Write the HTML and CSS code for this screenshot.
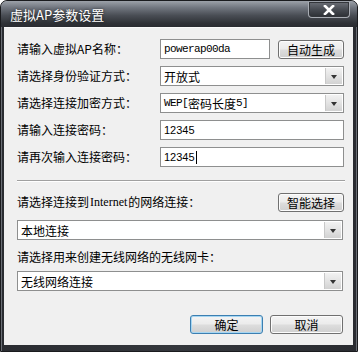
FILE: index.html
```html
<!DOCTYPE html>
<html lang="zh-CN">
<head>
<meta charset="utf-8">
<title>虚拟AP参数设置</title>
<link rel="stylesheet" href="styles.css">
</head>
<body>
<div class="window">
  <div class="titlebar">
    <div class="title">虚拟AP参数设置</div>
    <div class="close">
      <svg width="14" height="10" viewBox="0 0 14 10"><path d="M3 1 L11 9 M11 1 L3 9" stroke="#fff" stroke-width="2.6" stroke-linecap="square"/></svg>
    </div>
  </div>
  <div class="body">
    <div class="form">
      <div class="label">请输入虚拟AP名称：</div>
      <div class="ctrl">
        <div class="input mono short">powerap00da</div>
        <div class="btn small">自动生成</div>
      </div>
      <div class="label">请选择身份验证方式：</div>
      <div class="ctrl">
        <div class="select"><span class="val">开放式</span><span class="arrow"></span></div>
      </div>
      <div class="label">请选择连接加密方式：</div>
      <div class="ctrl">
        <div class="select"><span class="val"><span class="mono">WEP[</span>密码长度<span class="mono">5]</span></span><span class="arrow"></span></div>
      </div>
      <div class="label">请输入连接密码：</div>
      <div class="ctrl">
        <div class="input num">12345</div>
      </div>
      <div class="label">请再次输入连接密码：</div>
      <div class="ctrl">
        <div class="input num">12345<span class="caret"></span></div>
      </div>
    </div>
    <div class="sep"></div>
    <div class="row-head">
      <div class="label">请选择连接到<span class="serif">Internet</span>的网络连接：</div>
      <div class="btn small">智能选择</div>
    </div>
    <div class="select wide"><span class="val">本地连接</span><span class="arrow"></span></div>
    <div class="label lab2">请选择用来创建无线网络的无线网卡：</div>
    <div class="select wide wide2"><span class="val">无线网络连接</span><span class="arrow"></span></div>
    <div class="actions">
      <div class="btn action default">确定</div>
      <div class="btn action">取消</div>
    </div>
  </div>
</div>
</body>
</html>
```

FILE: styles.css
```css
html, body {
  margin: 0;
  padding: 0;
  background: #ffffff;
}
body {
  font-family: "Noto Sans CJK SC", "Noto Sans", sans-serif;
  font-size: 12px;
  color: #000;
}
.window {
  width: 358px;
  height: 352px;
  box-sizing: border-box;
  display: flex;
  flex-direction: column;
  background: linear-gradient(90deg, #2a2c31, #34373c 50%, #2a2c31);
  border-radius: 7px 7px 0 0;
  border: 1px solid #1a1b1e;
  box-shadow: inset 0 1px 0 #a8adb5, inset 1px 0 0 #6a6e75, inset -1px 0 0 #6a6e75;
}
.titlebar {
  height: 26px;
  display: flex;
  justify-content: space-between;
  align-items: flex-start;
  padding: 0 7px 0 9px;
  background: linear-gradient(180deg, #9ca1a9 0%, #727780 25%, #4a4e55 55%, #2f3237 85%, #2a2c31 100%);
  border-radius: 6px 6px 0 0;
}
.title {
  color: #fff;
  font-size: 13px;
  line-height: 16px;
  margin-top: 6px;
  text-shadow: 0 0 3px rgba(0,0,0,0.6);
}
.close {
  width: 42px;
  height: 16px;
  margin-top: 1px;
  box-sizing: border-box;
  border: 1px solid #a9adb4;
  border-top: none;
  border-radius: 0 0 4px 4px;
  background: linear-gradient(180deg, #6c7078 0%, #474b52 50%, #2c2f34 100%);
  display: flex;
  align-items: center;
  justify-content: center;
  box-shadow: inset 0 0 0 1px #33363b;
}
.body {
  flex: 1;
  margin: 0 4px 6px 3px;
  background: #f0f0f0;
  border-top: 1px solid #fafafa;
  padding: 11px 9px 0 13px;
  display: flex;
  flex-direction: column;
}
.form {
  display: grid;
  grid-template-columns: 143px 1fr;
  grid-auto-rows: 20px;
  row-gap: 7px;
}
.label {
  display: flex;
  align-items: center;
  font-size: 12px;
  line-height: 16px;
  white-space: nowrap;
}
.ctrl {
  display: flex;
  align-items: stretch;
  gap: 8px;
}
.input {
  box-sizing: border-box;
  height: 20px;
  flex: 1;
  border: 1px solid #8e8f8f;
  background: #fff;
  display: flex;
  align-items: center;
  padding-left: 3px;
}
.input.short {
  flex: 0 0 110px;
}
.mono {
  font-family: "Liberation Mono", monospace;
  font-size: 11px;
  letter-spacing: -0.6px;
}
.serif {
  font-family: "Liberation Serif", serif;
  font-size: 12px;
  margin: 0 1px;
}
.num {
  font-family: "Liberation Sans", sans-serif;
  font-size: 11px;
}
.caret {
  display: inline-block;
  width: 1px;
  height: 13px;
  background: #000;
  margin-left: 1px;
}
.btn {
  box-sizing: border-box;
  display: flex;
  align-items: center;
  justify-content: center;
  border: 1px solid #707070;
  border-radius: 3px;
  background: linear-gradient(180deg, #f4f4f4 0%, #ebebeb 48%, #dddddd 52%, #cfcfcf 100%);
  box-shadow: inset 0 0 0 1px #fcfcfc;
  font-size: 12px;
}
.btn.small {
  width: 66px;
  height: 19px;
  margin-top: 1px;
}
.select {
  box-sizing: border-box;
  height: 20px;
  flex: 1;
  border: 1px solid #8e8f8f;
  background: #fff;
  display: flex;
  align-items: stretch;
}
.select .val {
  flex: 1;
  display: flex;
  align-items: center;
  padding-left: 3px;
}
.select .arrow {
  width: 16px;
  margin: 1px;
  background: linear-gradient(180deg, #f2f2f2 0%, #e3e3e3 50%, #d2d2d2 100%);
  border-left: 1px solid #c8c8c8;
  position: relative;
}
.select .arrow::after {
  content: "";
  position: absolute;
  left: 5px;
  top: 7px;
  border-left: 3px solid transparent;
  border-right: 3px solid transparent;
  border-top: 4px solid #333;
}
.sep {
  margin-top: 13px;
  border-top: 1px solid #a0a0a0;
  border-bottom: 1px solid #ffffff;
  margin-right: -1px;
}
.row-head {
  display: flex;
  justify-content: space-between;
  align-items: center;
  margin-top: 10px;
  height: 20px;
}
.row-head .btn.small {
  margin-top: 0;
}
.select.wide {
  flex: none;
  margin-top: 8px;
  margin-right: 1px;
}
.lab2 {
  margin-top: 8px;
  height: 18px;
}
.select.wide2 {
  margin-top: 5px;
}
.actions {
  margin-top: 24px;
  display: flex;
  justify-content: flex-end;
  gap: 7px;
  margin-right: 1px;
}
.btn.action {
  width: 73px;
  height: 19px;
}
.btn.default {
  border-color: #3c7fb1;
  box-shadow: inset 0 0 0 1px #a6d6f2;
}
```
